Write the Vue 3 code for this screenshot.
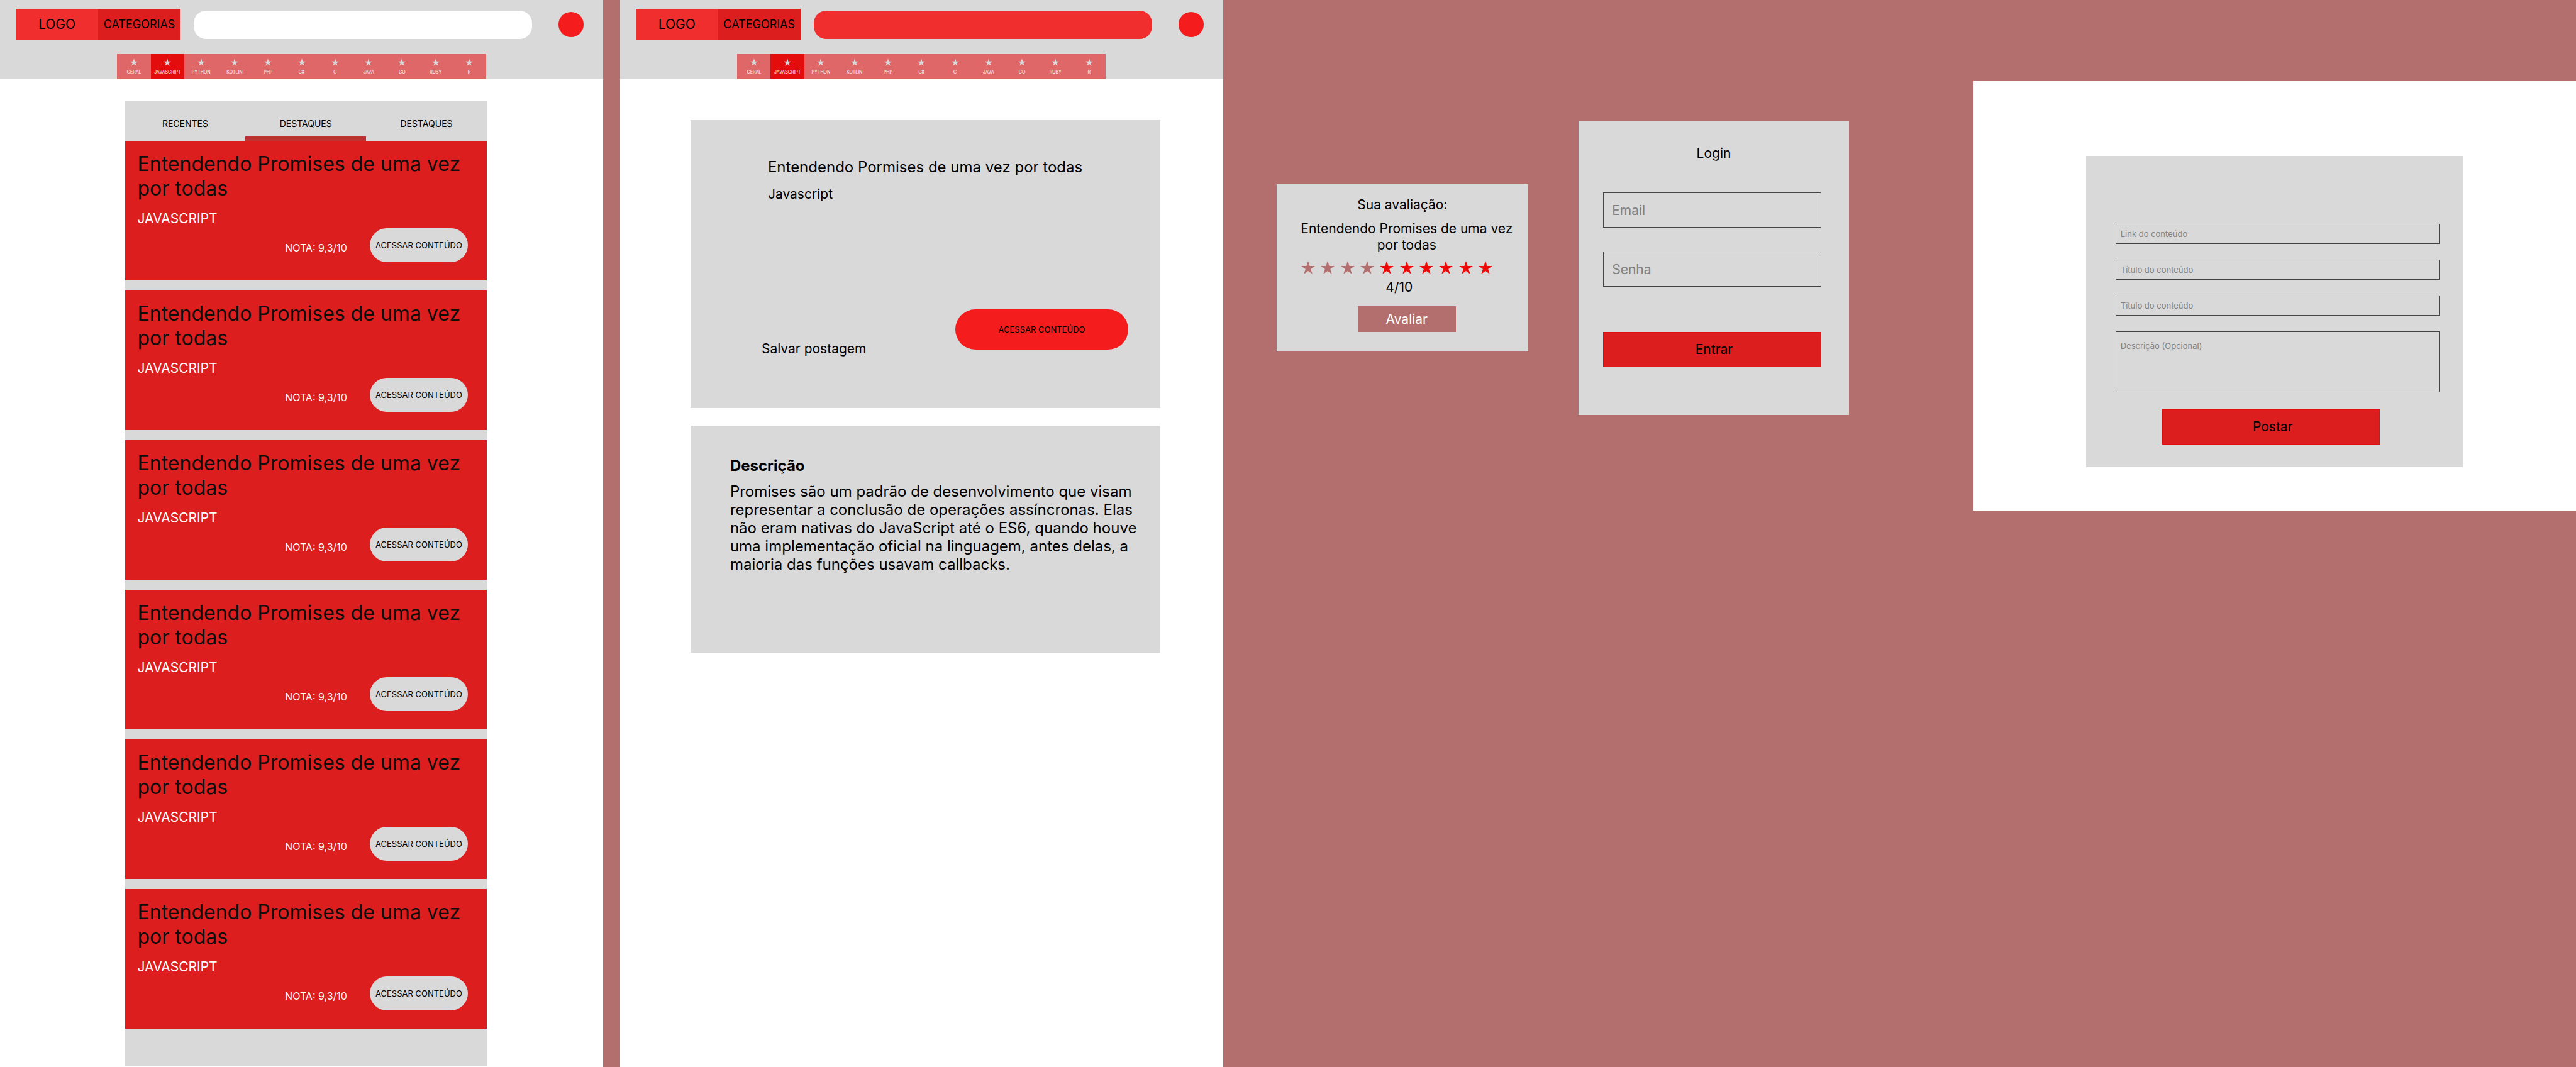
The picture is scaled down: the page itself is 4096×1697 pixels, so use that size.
<script setup>
import { ref } from 'vue'

const categories = ['GERAL', 'JAVASCRIPT', 'PYTHON', 'KOTLIN', 'PHP', 'C#', 'C', 'JAVA', 'GO', 'RUBY', 'R']
const activeCategory = ref('JAVASCRIPT')

const screens = [
  { id: 'feed', searchClass: 'search-light' },
  { id: 'detail', searchClass: 'search-red' },
]

const tabs = ['RECENTES', 'DESTAQUES', 'DESTAQUES']
const activeTab = ref(1)

const posts = Array.from({ length: 6 }, (_, id) => ({
  id,
  title: 'Entendendo Promises de uma vez por todas',
  category: 'JAVASCRIPT',
  score: '9,3/10',
}))

const rating = ref(4)
const starPoints =
  '0,-50 11.2,-15.5 47.6,-15.5 18.2,5.9 29.4,40.5 0,19.1 -29.4,40.5 -18.2,5.9 -47.6,-15.5 -11.2,-15.5'
</script>

<template>
  <div class="board">
    <section v-for="screen in screens" :key="screen.id" class="screen" :class="screen.id">
      <header class="header">
        <div class="top-row">
          <a href="#" class="logo">LOGO</a>
          <button type="button" class="categories-button">CATEGORIAS</button>
          <input type="search" class="search" :class="screen.searchClass" aria-label="Buscar" />
          <button type="button" class="avatar" aria-label="Perfil"></button>
        </div>
        <nav class="category-bar">
          <a
            v-for="name in categories"
            :key="name"
            href="#"
            class="category"
            :class="{ active: name === activeCategory }"
            @click.prevent="activeCategory = name"
          >
            <svg class="category-star" viewBox="-48 -50 96 91" aria-hidden="true">
              <polygon :points="starPoints" />
            </svg>
            <span>{{ name }}</span>
          </a>
        </nav>
      </header>

      <main v-if="screen.id === 'feed'" class="feed-list">
        <div class="tabs">
          <button
            v-for="(tab, i) in tabs"
            :key="i"
            type="button"
            class="tab"
            :class="{ active: i === activeTab }"
            @click="activeTab = i"
          >
            {{ tab }}
          </button>
        </div>
        <div class="posts">
          <article v-for="post in posts" :key="post.id" class="post">
            <h2 class="post-title">{{ post.title }}</h2>
            <p class="post-category">{{ post.category }}</p>
            <div class="post-footer">
              <span class="post-score">NOTA: {{ post.score }}</span>
              <button type="button" class="access">ACESSAR CONTEÚDO</button>
            </div>
          </article>
        </div>
      </main>

      <main v-else class="detail-list">
        <article class="panel summary">
          <h1 class="summary-title">Entendendo Pormises de uma vez por todas</h1>
          <p class="summary-category">Javascript</p>
          <div class="summary-actions">
            <button type="button" class="save">Salvar postagem</button>
            <button type="button" class="access access-wide">ACESSAR CONTEÚDO</button>
          </div>
        </article>
        <article class="panel description">
          <h2 class="description-title">Descrição</h2>
          <p class="description-text">
            Promises são um padrão de desenvolvimento que visam representar a conclusão de operações
            assíncronas. Elas não eram nativas do JavaScript até o ES6, quando houve uma implementação
            oficial na linguagem, antes delas, a maioria das funções usavam callbacks.
          </p>
        </article>
      </main>
    </section>

    <form class="panel rating" @submit.prevent>
      <h2 class="dialog-title">Sua avaliação:</h2>
      <p class="rating-post">Entendendo Promises de uma vez por todas</p>
      <div class="stars">
        <button
          v-for="n in 10"
          :key="n"
          type="button"
          class="star"
          :class="{ rated: n <= rating }"
          :aria-label="`Nota ${n}`"
          @click="rating = n"
        >
          <svg viewBox="-48 -50 96 91" aria-hidden="true"><polygon :points="starPoints" /></svg>
        </button>
      </div>
      <output class="rating-value">{{ rating }}/10</output>
      <div class="rating-submit">
        <button type="submit" class="rate-button">Avaliar</button>
      </div>
    </form>

    <form class="panel login" @submit.prevent>
      <h2 class="dialog-title">Login</h2>
      <input type="email" class="field" placeholder="Email" aria-label="Email" />
      <input type="password" class="field" placeholder="Senha" aria-label="Senha" />
      <button type="submit" class="submit">Entrar</button>
    </form>

    <section class="publish">
      <form class="panel publish-form" @submit.prevent>
        <input type="url" class="field small" placeholder="Link do conteúdo" aria-label="Link do conteúdo" />
        <input type="text" class="field small" placeholder="Título do conteúdo" aria-label="Título do conteúdo" />
        <input type="text" class="field small" placeholder="Título do conteúdo" aria-label="Título do conteúdo" />
        <textarea class="field small area" placeholder="Descrição (Opcional)" aria-label="Descrição (Opcional)"></textarea>
        <button type="submit" class="submit">Postar</button>
      </form>
    </section>
  </div>
</template>

<style>
body {
  margin: 0;
  background: #b36f6d;
}
</style>

<style scoped>
.board {
  display: grid;
  grid-template-columns:
    minmax(0, 1440fr) minmax(0, 40fr) minmax(0, 1440fr) minmax(0, 128fr) minmax(0, 600fr)
    minmax(0, 121fr) minmax(0, 645fr) minmax(0, 296fr) minmax(0, 1440fr);
  min-height: 100vh;
  background: #b36f6d;
  color: #000;
  font-family: Inter, "Liberation Sans", sans-serif;
  font-size: 21px;
  line-height: 26px;
}

.board *,
.board *::before {
  box-sizing: border-box;
}

h1,
h2,
p {
  margin: 0;
  font-weight: 400;
}

button,
input,
textarea {
  margin: 0;
  padding: 0;
  border: 0;
  border-radius: 0;
  background: none;
  color: inherit;
  font: inherit;
}

button {
  cursor: pointer;
}

a {
  color: inherit;
  text-decoration: none;
}

.panel {
  background: #d9d9d9;
}

/* Screens */
.screen {
  grid-row: 1;
  background: #fff;
}

.feed {
  grid-column: 1;
}

.detail {
  grid-column: 3;
}

/* Header */
.header {
  display: flex;
  flex-direction: column;
  gap: 22px;
  padding-top: 14px;
  background: #d9d9d9;
}

.top-row {
  display: flex;
  align-items: center;
  padding: 0 31px 0 25px;
}

.logo,
.categories-button {
  display: flex;
  align-items: center;
  justify-content: center;
  width: 131px;
  height: 50px;
}

.logo {
  background: #f02e2e;
}

.categories-button {
  background: #dc1e1e;
  font-size: 18px;
}

.search {
  flex: 1;
  min-width: 0;
  height: 45px;
  margin: 0 42px 0 21px;
  padding: 0 20px;
  border-radius: 20px;
}

.search-light {
  background: #fff;
}

.search-red {
  background: #f02e2e;
}

.avatar {
  width: 40px;
  height: 40px;
  border-radius: 50%;
  background: #f41c1c;
}

.category-bar {
  display: flex;
  width: 61.11%;
  margin: 0 auto;
  background: #df6767;
}

.category {
  display: flex;
  flex: 1;
  flex-direction: column;
  align-items: center;
  gap: 6px;
  min-width: 0;
  height: 40px;
  padding-top: 7px;
  color: #fff;
  font-size: 7px;
  line-height: 8px;
}

.category.active {
  background: #e40d0d;
}

.category-star {
  width: 12px;
  height: 12px;
  fill: #d9d9d9;
}

/* Feed */
.feed-list {
  width: 60%;
  margin: 34px 0 0 20.7%;
  padding-bottom: 60px;
  background: #d9d9d9;
}

.tabs {
  display: flex;
}

.tab {
  position: relative;
  flex: 1;
  height: 64px;
  padding-top: 10px;
  font-size: 14px;
}

.tab.active::before {
  position: absolute;
  right: 0;
  bottom: 0;
  left: 0;
  height: 7px;
  background: #bb3434;
  content: "";
}

.posts {
  display: flex;
  flex-direction: column;
  gap: 16px;
}

.post {
  padding: 17px 30px 29px 20px;
  background: #dc1e1e;
}

.post-title {
  color: #110d0d;
  font-size: 32px;
  line-height: 39px;
}

.post-category {
  margin-top: 16px;
  color: #fff;
}

.post-footer {
  display: flex;
  align-items: center;
  justify-content: flex-end;
  gap: 36px;
  margin-top: 2px;
}

.post-score {
  padding-top: 8px;
  color: #fff;
  font-size: 16px;
}

.access {
  width: 156px;
  height: 54px;
  border-radius: 32px;
  background: #d9d9d9;
  font-size: 13px;
  white-space: nowrap;
}

/* Detail */
.detail-list {
  display: flex;
  flex-direction: column;
  gap: 28px;
  width: 77.9%;
  margin: 65px 0 0 11.7%;
}

.summary {
  padding: 60px 51px 81px 113px;
}

.summary-title,
.summary-category {
  padding-left: 10px;
}

.summary-title {
  font-size: 24px;
  line-height: 29px;
}

.summary-category {
  margin-top: 16px;
}

.summary-actions {
  display: flex;
  align-items: flex-start;
  justify-content: space-between;
  margin-top: 170px;
}

.save {
  margin-top: 50px;
}

.access-wide {
  width: 275px;
  height: 64px;
  background: #f41c1c;
}

.description {
  padding: 49px 30px 126px 63px;
  font-size: 24px;
  line-height: 29px;
}

.description-title {
  font-size: 24px;
  font-weight: 700;
}

.description-text {
  margin-top: 12px;
}

/* Dialogs */
.dialog-title {
  font-size: 21px;
  text-align: center;
}

.rating {
  display: flex;
  grid-row: 1;
  grid-column: 5;
  flex-direction: column;
  align-self: start;
  margin-top: 293px;
  padding: 20px 0 31px;
}

.rating-post {
  margin-top: 12px;
  padding: 0 10px 0 24px;
  text-align: center;
}

.stars {
  display: flex;
  justify-content: space-between;
  width: 304px;
  margin: 12px 0 8px 39px;
}

.star {
  width: 22px;
  height: 21px;
}

.star svg {
  display: block;
  width: 22px;
  height: 21px;
  fill: #f00909;
}

.star.rated svg {
  fill: #b36f6d;
}

.rating-value {
  padding-right: 10px;
  text-align: center;
}

.rating-submit {
  display: flex;
  justify-content: center;
  margin-top: 17px;
  padding-left: 14px;
}

.rate-button {
  width: 156px;
  height: 41px;
  background: #b36f6d;
  color: #fff;
}

.field {
  display: block;
  width: 100%;
  height: 56px;
  padding: 0 13px;
  border: 1px solid #444;
}

.field::placeholder {
  color: #808080;
  opacity: 1;
}

.submit {
  display: block;
  height: 56px;
  padding-left: 6px;
  border: 1px solid #e40d0d;
  background: #dc1e1e;
}

.login {
  display: flex;
  grid-row: 1;
  grid-column: 7;
  flex-direction: column;
  align-self: start;
  margin-top: 192px;
  padding: 39px 44px 76px 39px;
}

.login .dialog-title {
  margin-bottom: 49px;
  padding-left: 5px;
}

.login .field + .field {
  margin: 38px 0 72px;
}

.publish {
  grid-row: 1;
  grid-column: 9;
  align-self: start;
  margin-top: 129px;
  padding: 119px 0 69px;
  background: #fff;
}

.publish-form {
  width: 62.5%;
  margin: 0 auto;
  padding: 108px 37px 36px 47px;
}

.field.small {
  height: 32px;
  margin-bottom: 25px;
  padding: 0 7px;
  font-size: 13px;
  line-height: 16px;
}

.field.area {
  height: 97px;
  margin-bottom: 27px;
  padding-top: 14px;
  resize: none;
}

.publish .submit {
  width: 346px;
  margin-left: 74px;
}
</style>
